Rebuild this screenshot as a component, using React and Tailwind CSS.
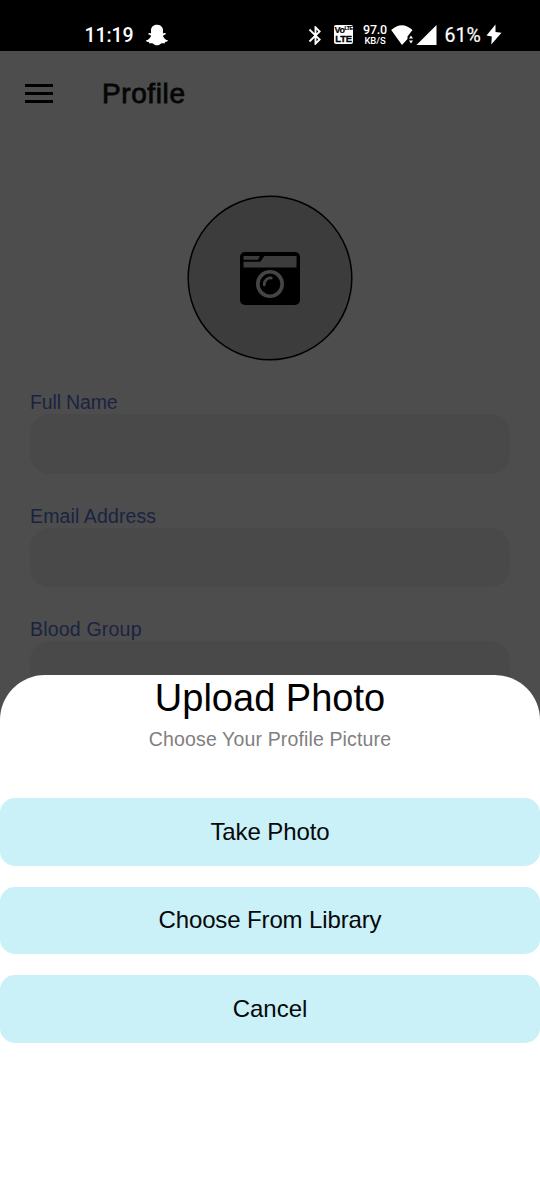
import React from "react";
import { FaSnapchatGhost } from "react-icons/fa";
import { MdBluetooth } from "react-icons/md";

function StatusBar() {
  return (
    <div className="flex h-[51px] shrink-0 items-start bg-black pt-[23px] font-[Roboto,sans-serif] text-white">
      <span className="ml-[84.500px] w-[51.500px] text-[19.500px] leading-[25px] font-medium tracking-[-0.1px] whitespace-nowrap">11:19</span>
      <FaSnapchatGhost className="ml-[10px] mt-[1px] h-[22px] w-[22px]" />
      <MdBluetooth className="ml-[136px] mt-px h-[23px] w-[23px]" />
      <div className="ml-[7px] mt-[2px] flex h-[19px] w-[19px] flex-col items-center overflow-hidden rounded-[2px] bg-white pt-[1px] font-['Liberation_Sans',sans-serif] font-bold text-black">
        <span className="flex text-[9px] leading-[8px] tracking-[-0.4px] [-webkit-text-stroke:0.2px_black]">
          Vo<span className="text-[5px] leading-[5px]">LTE</span>
        </span>
        <span className="text-[9.5px] leading-[9px] tracking-[-0.3px] [-webkit-text-stroke:0.3px_black]">LTE</span>
      </div>
      <div className="ml-[9px] mt-px flex w-[26px] flex-col items-center font-medium whitespace-nowrap">
        <span className="text-[12.5px] leading-[12px] tracking-[-0.2px]">97.0</span>
        <span className="text-[9.5px] leading-[9px] tracking-[-0.1px]">KB/S</span>
      </div>
      <svg className="ml-[3px] mt-[2px] h-[20px] w-[23px]" viewBox="0 0 23 20" fill="currentColor">
        <path d="M0.200 5Q10.800 -4.500 21.500 5L18 9.500L16.500 11.500V14L11 20Z" />
        <path d="M20 10.500l2 3h-4zM20 18.500l2-3h-4z" />
      </svg>
      <svg className="ml-[2px] mt-[1.500px] h-[20.500px] w-[21px]" viewBox="0 0 21 20" preserveAspectRatio="none" fill="currentColor">
        <path d="M20.500 0v20H0z" />
      </svg>
      <span className="ml-[7.500px] w-[36.500px] text-[19.500px] leading-[26px] whitespace-nowrap [-webkit-text-stroke:0.2px_white]">61%</span>
      <svg className="ml-[5px] mt-px h-[21px] w-[16px]" viewBox="0 0 16 21" fill="currentColor">
        <path d="M9.500 0.500L0.500 11.500L5.800 12.500L5.300 20.500L15.500 8.800L9.500 8Z" />
      </svg>
    </div>
  );
}

function AvatarPlaceholder() {
  return (
    <svg className="h-[166px] w-[166px]" viewBox="0 0 166 166">
      <circle cx="83" cy="83" r="81.800" fill="#3c3c3c" stroke="#000" strokeWidth="1.500" />
      <g transform="translate(53 57)">
        <rect width="60" height="53" rx="5" fill="#000" />
        <path d="M3.500 4H19.800L18 7.800H3.500ZM3.500 9.700H20.500L24.300 4H56.500V15.500H3.500Z" fill="#3c3c3c" />
        <circle cx="30" cy="32" r="12.200" fill="none" stroke="#454545" strokeWidth="3.600" />
        <path d="M24.300 32.800A6.300 6.300 0 0 1 31.200 26" fill="none" stroke="#454545" strokeWidth="2.800" strokeLinecap="round" />
      </g>
    </svg>
  );
}

const fields = [
  { label: "Full Name", spacing: "tracking-[-0.15px]" },
  { label: "Email Address", spacing: "tracking-[0.12px]" },
  { label: "Blood Group", spacing: "tracking-[0.2px]" },
];

const actions = [
  { label: "Take Photo", spacing: "tracking-[-0.1px]" },
  { label: "Choose From Library", spacing: "tracking-[-0.13px]" },
  { label: "Cancel", spacing: "tracking-normal" },
];

export default function App() {
  return (
    <main className="relative flex h-[1200px] w-[540px] flex-col overflow-hidden bg-[#4d4d4d] font-['Liberation_Sans',Arial,sans-serif]">
      <StatusBar />
      <header className="flex h-[84px] items-center pl-[25px]">
        <button aria-label="Menu" className="flex w-[28px] flex-col gap-[5px]">
          <span className="h-[3px] bg-black" />
          <span className="h-[3px] bg-black" />
          <span className="h-[3px] bg-black" />
        </button>
        <h1 className="mt-[2px] ml-[49px] text-[28px] leading-[34px] tracking-[0.6px] text-[#060606] [-webkit-text-stroke:0.8px_#060606]">Profile</h1>
      </header>
      <div className="mt-[60px] flex justify-center">
        <AvatarPlaceholder />
      </div>
      <div className="mt-[29px] flex flex-col px-[30px]">
        {fields.map(({ label, spacing }) => (
          <div key={label} className="flex h-[113.700px] shrink-0 flex-col">
            <span className={`h-[24px] text-[19.500px] leading-[24px] text-[#1b2342] ${spacing}`}>{label}</span>
            <div className="h-[59.500px] rounded-[20px] bg-[#494949]" />
          </div>
        ))}
      </div>

      <section className="absolute inset-x-0 bottom-0 flex h-[525px] flex-col rounded-t-[45px] bg-white text-center">
        <h2 className="h-[46px] text-[38px] leading-[46px] text-black">Upload Photo</h2>
        <p className="mt-[6px] h-[24px] text-[19.500px] leading-[24px] tracking-[0.14px] text-[#808080]">Choose Your Profile Picture</p>
        <div className="mt-[47px] flex flex-col gap-[21px]">
          {actions.map(({ label, spacing }) => (
            <button key={label} className={`h-[67.500px] rounded-[15px] bg-[#caf0f8] text-[24px] text-[#050809] ${spacing}`}>
              {label}
            </button>
          ))}
        </div>
      </section>
    </main>
  );
}
